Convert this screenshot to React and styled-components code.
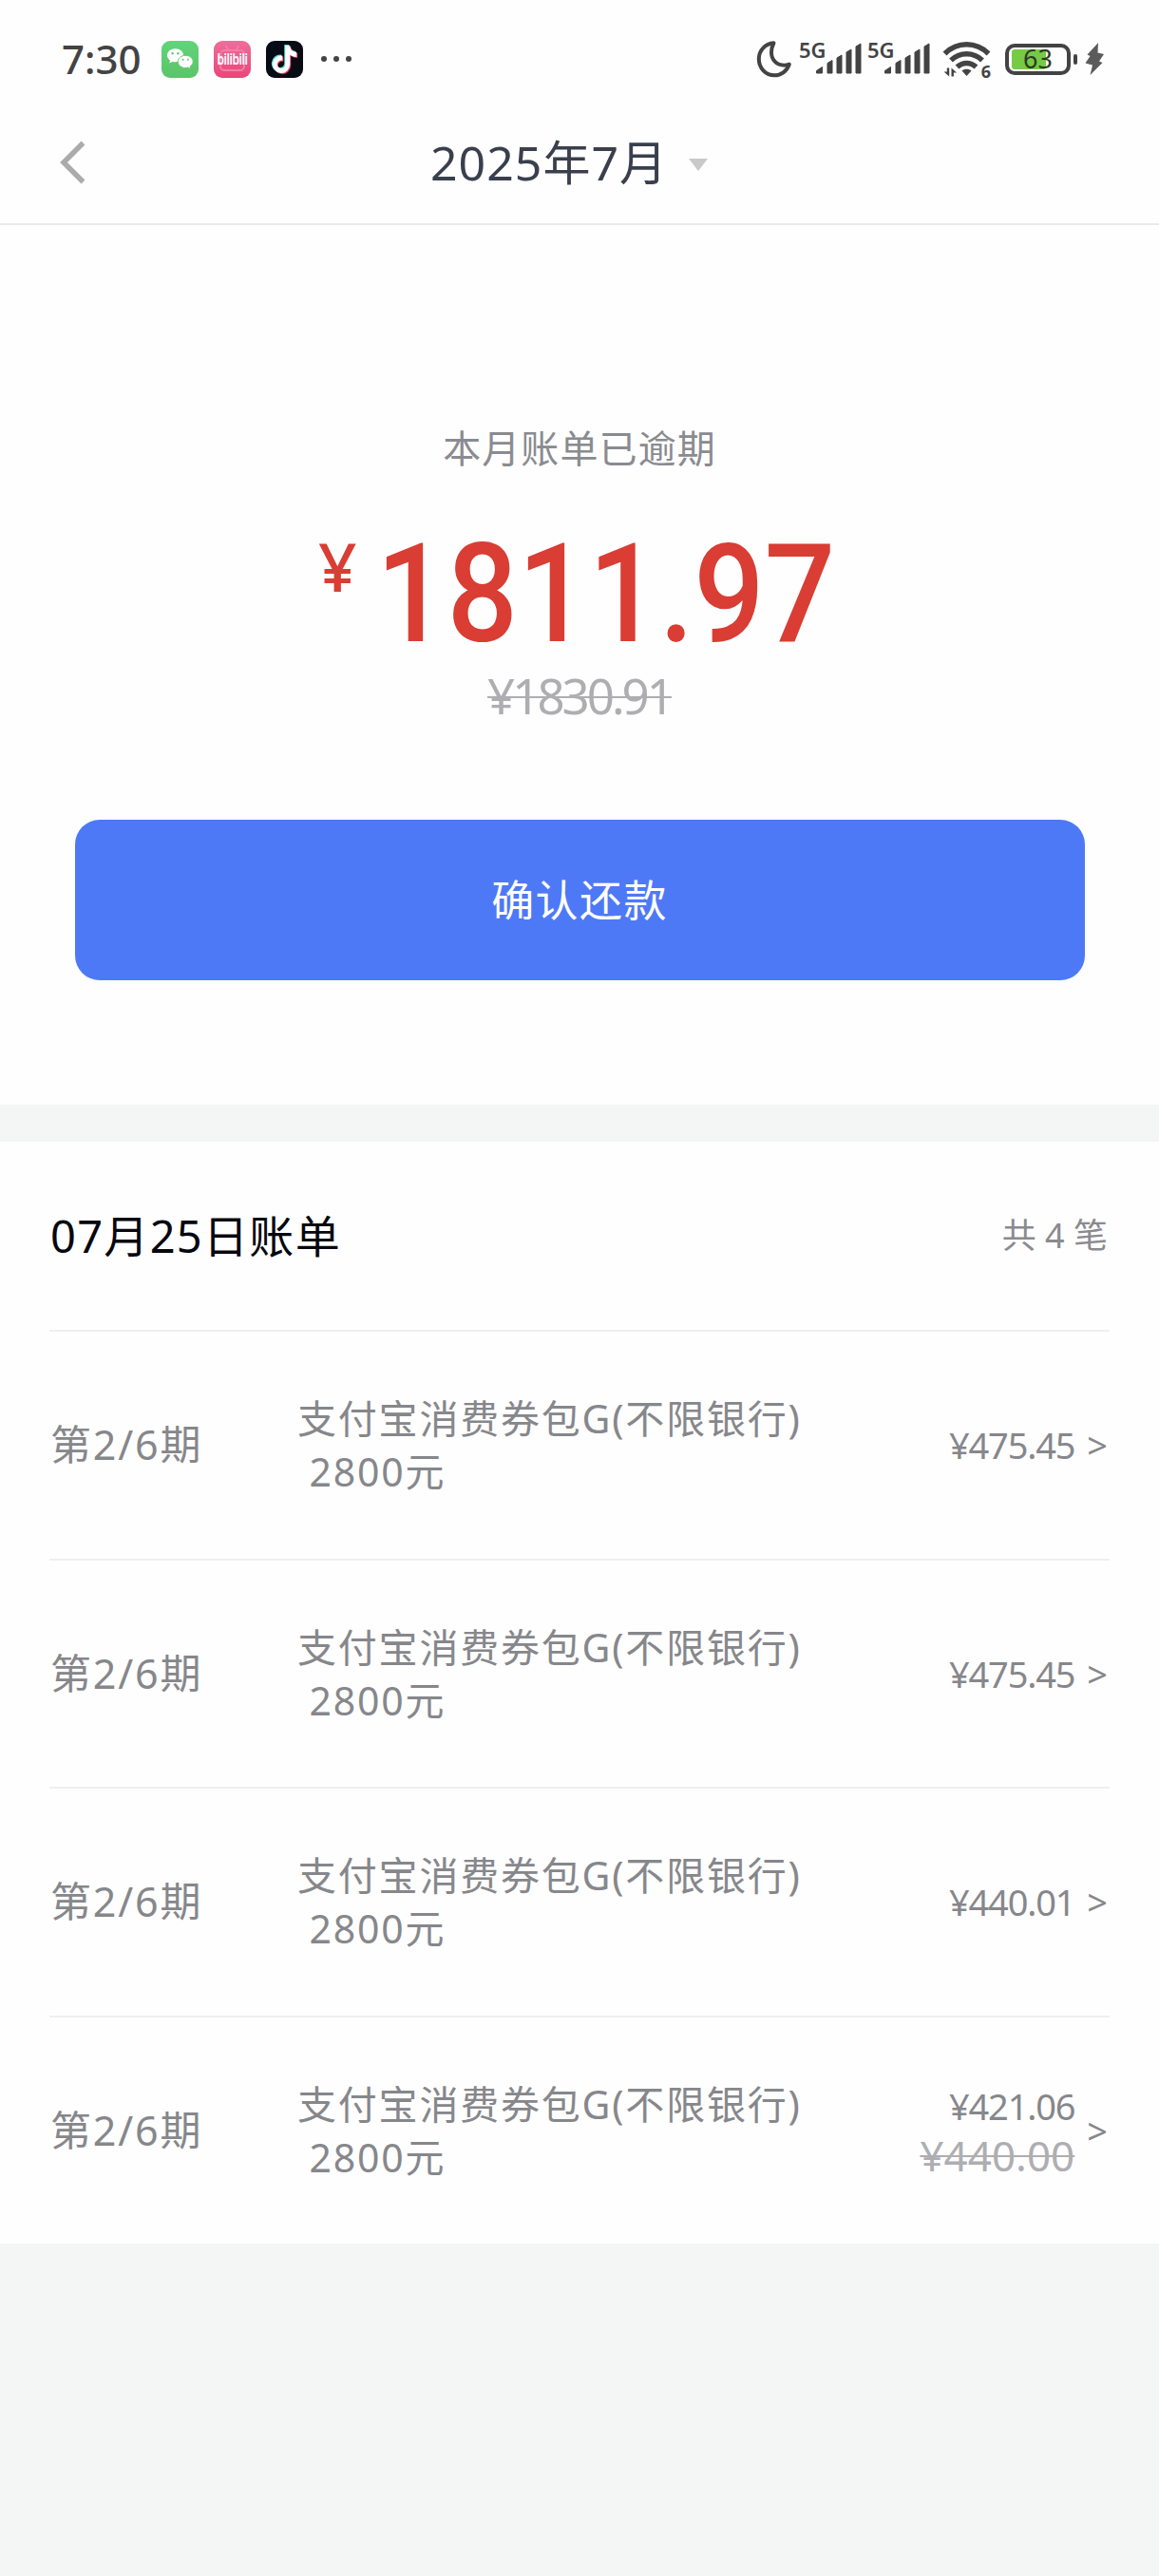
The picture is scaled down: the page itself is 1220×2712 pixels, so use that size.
import React from "react";
import styled, { createGlobalStyle } from "styled-components";
import { FaTiktok } from "react-icons/fa6";

const bills = [
  { id: 1, term: "第2/6期", amount: "¥475.45" },
  { id: 2, term: "第2/6期", amount: "¥475.45" },
  { id: 3, term: "第2/6期", amount: "¥440.01" },
  { id: 4, term: "第2/6期", amount: "¥421.06", origin: "¥440.00" },
];

const productName = "支付宝消费券包G(不限银行)\n 2800元";

const WechatIcon = () => (
  <svg width="39" height="39" viewBox="0 0 39 39">
    <path
      fill="#fff"
      d="M14.500 8.300C9.800 8.300 6 11.400 6 15.300c0 2.200 1.200 4.100 3.100 5.400l-.9 2.900 3.300-1.700c1 .3 2 .4 3 .4 4.700 0 8.600-3.100 8.600-7s-3.900-7-8.600-7z"
    />
    <path
      fill="#fff"
      stroke="#5ecb70"
      strokeWidth="1"
      d="M25.300 15.300c-4.400 0-8 2.900-8 6.600s3.600 6.600 8 6.600c.9 0 1.800-.1 2.600-.4l3 1.600-.8-2.700c1.900-1.200 3.100-3 3.100-5.100 0-3.700-3.500-6.600-7.900-6.600z"
    />
    <g fill="#5ecb70">
      <circle cx="11.600" cy="13.200" r="1.200" />
      <circle cx="17.400" cy="13.200" r="1.200" />
      <circle cx="22.600" cy="19.800" r="1" />
      <circle cx="27.800" cy="19.800" r="1" />
    </g>
  </svg>
);

const TvOutline = () => (
  <svg width="39" height="39" viewBox="0 0 39 39" fill="none">
    <g stroke="#f07ea5" strokeWidth="2" strokeLinecap="round">
      <rect x="7" y="10" width="25" height="21" rx="4" />
      <path d="M13 6l3 4M26 6l-3 4" />
    </g>
  </svg>
);

const MoonIcon = () => (
  <svg width="38" height="40" viewBox="0 0 38 40">
    <path
      d="M18.500 3.300C9.500 4 2.800 11 2.800 20c0 9.700 7.300 17.300 16.400 17.300 7.200 0 13.400-4.700 15.600-11.600-2 .8-3.600 1-5.300 1C21.600 26.700 16 21 16 13.300c0-3.700.9-7 2.500-10z"
      fill="none"
      stroke="#434343"
      strokeWidth="4"
      strokeLinejoin="round"
    />
  </svg>
);

const SignalBars = () => (
  <svg width="66" height="36" viewBox="0 0 66 36">
    <path
      fill="#434343"
      stroke="#434343"
      strokeWidth="1"
      strokeLinejoin="round"
      d="M17.500 30.500l6-4v6.500h-6zM29 22.500l5-3V33h-5zM39 17l5-3v19h-5zM49 11l5-3v25h-5zM59 5l5-3v31h-5z"
    />
  </svg>
);

const WifiIcon = () => (
  <svg width="52" height="42" viewBox="0 0 52 42">
    <g fill="none" stroke="#434343" strokeWidth="5.500">
      <path d="M2.500 15.500C15.500 2.500 35.500 2.500 48.500 15.500" />
      <path d="M9 22.500C18.500 13.500 32.500 13.500 42 22.500" />
      <path d="M15.500 29.500C21.500 24 29.500 24 35.500 29.500" />
    </g>
    <path
      fill="#434343"
      d="M25.500 39l-5-5.500c2.500-2.300 7.500-2.300 10 0zM4.800 30.500h2.400V39.500L1.500 34.500h3.300zM9.500 39.500v-9l5.500 5h-3.100v4z"
    />
  </svg>
);

const BoltIcon = () => (
  <svg width="22" height="36" viewBox="0 0 22 36">
    <path
      fill="#5b5b5b"
      d="M15 1L3.500 13.500 6.500 15 1.500 22.500l7.500 2L6.500 35 19.500 22l-3.500-1.500L21 13l-6.500-1.500z"
    />
  </svg>
);

const BackIcon = () => (
  <svg width="30" height="48" viewBox="0 0 30 48">
    <path
      d="M25.500 3.500L5 24l20.500 20.500"
      fill="none"
      stroke="#ababab"
      strokeWidth="5.500"
    />
  </svg>
);

const Signal = () => (
  <SignalBox>
    <SignalBars />
    <SignalLabel>5G</SignalLabel>
  </SignalBox>
);

const BillItem = ({ term, amount, origin }) => (
  <BillRow>
    <Term>{term}</Term>
    <ProductName>{productName}</ProductName>
    <AmountBox>
      <Amount>{amount}</Amount>
      {origin && <OriginAmount>{origin}</OriginAmount>}
    </AmountBox>
    <Arrow>&gt;</Arrow>
  </BillRow>
);

const App = () => {
  return (
    <Page>
      <GlobalStyle />
      <StatusBar>
        <Time>7:30</Time>
        <AppList>
          <AppBadge $background="linear-gradient(#62d479, #5cc46a)">
            <WechatIcon />
          </AppBadge>
          <AppBadge $background="linear-gradient(#f06d9b, #e94679)">
            <TvOutline />
            <BiliText>bilibili</BiliText>
          </AppBadge>
          <AppBadge $background="#070b14">
            <Note $color="#4fe3e0" $shift={-1} />
            <Note $color="#ee3b5e" $shift={1} />
            <Note $color="#fff" $shift={0} />
          </AppBadge>
        </AppList>
        <Dots>
          <i />
          <i />
          <i />
        </Dots>
        <SystemIcons>
          <MoonIcon />
          <Signal />
          <Signal />
          <WifiBox>
            <WifiIcon />
            <WifiLabel>6</WifiLabel>
          </WifiBox>
          <Battery>
            <BatteryLevel />
            <BatteryText>63</BatteryText>
          </Battery>
          <BatteryNub />
          <BoltIcon />
        </SystemIcons>
      </StatusBar>

      <Header>
        <BackButton>
          <BackIcon />
        </BackButton>
        <MonthPicker>
          2025年7月
          <Caret />
        </MonthPicker>
      </Header>

      <Summary>
        <SummaryLabel>本月账单已逾期</SummaryLabel>
        <Total>
          <Currency>¥</Currency>
          <TotalNumber>1811.97</TotalNumber>
        </Total>
        <TotalOrigin>¥1830.91</TotalOrigin>
        <PayButton>确认还款</PayButton>
      </Summary>

      <BillSection>
        <BillHeader>
          <BillTitle>07月25日账单</BillTitle>
          <BillCount>共 4 笔</BillCount>
        </BillHeader>
        {bills.map((bill) => (
          <BillItem key={bill.id} {...bill} />
        ))}
      </BillSection>
    </Page>
  );
};

const GlobalStyle = createGlobalStyle`
  * {
    box-sizing: border-box;
  }
  body {
    margin: 0;
    background-color: #f4f5f5;
    font-family: "Noto Sans", "Noto Sans CJK SC", sans-serif;
  }
  svg {
    display: block;
    flex: none;
  }
`;

const Page = styled.div`
  width: 1220px;
  min-height: 2712px;
  background-color: #f4f5f5;
`;

const StatusBar = styled.div`
  display: flex;
  align-items: center;
  height: 124px;
  padding: 0 57px 0 65px;
  background-color: #fefefe;
`;

const Time = styled.div`
  width: 105px;
  font-size: 42px;
  font-weight: 500;
  line-height: 60px;
  color: #434343;
`;

const AppList = styled.div`
  display: flex;
  gap: 16px;
`;

const AppBadge = styled.div`
  position: relative;
  width: 39px;
  height: 39px;
  border-radius: 9px;
  overflow: hidden;
  background: ${(props) => props.$background};
`;

const BiliText = styled.span`
  position: absolute;
  top: 9px;
  left: 0;
  width: 39px;
  font-size: 12px;
  font-weight: 600;
  line-height: 22px;
  text-align: center;
  letter-spacing: -0.4px;
  color: #fff;
  transform: scaleY(1.3);
`;

const Note = styled(FaTiktok)`
  position: absolute;
  top: ${(props) => 5 + props.$shift}px;
  left: ${(props) => 6 + props.$shift}px;
  width: 27px;
  height: 29px;
  color: ${(props) => props.$color};
`;

const Dots = styled.div`
  display: flex;
  gap: 7px;
  margin-left: 19px;

  i {
    width: 6px;
    height: 6px;
    border-radius: 50%;
    background-color: #434343;
  }
`;

const SystemIcons = styled.div`
  display: flex;
  align-items: center;
  margin-left: auto;
`;

const SignalBox = styled.div`
  position: relative;
  width: 66px;
  margin-left: 8px;

  & + & {
    margin-left: 6px;
  }
`;

const SignalLabel = styled.span`
  position: absolute;
  top: -2px;
  left: -1px;
  font-size: 22px;
  font-weight: 600;
  line-height: 20px;
  color: #434343;
`;

const WifiBox = styled.div`
  position: relative;
  margin-left: 12px;
`;

const WifiLabel = styled.span`
  position: absolute;
  right: 1px;
  bottom: -1px;
  font-size: 18px;
  font-weight: 700;
  line-height: 18px;
  color: #434343;
`;

const Battery = styled.div`
  position: relative;
  width: 69px;
  height: 33px;
  margin-left: 14px;
  padding: 2px 3px;
  border: 4px solid #434343;
  border-radius: 10px;
`;

const BatteryLevel = styled.div`
  width: 36px;
  height: 21px;
  border-radius: 3px;
  background-color: #76ca45;
`;

const BatteryText = styled.span`
  position: absolute;
  inset: -4px;
  font-size: 27px;
  line-height: 32px;
  text-align: center;
  color: #2c3a24;
`;

const BatteryNub = styled.div`
  width: 4px;
  height: 11px;
  margin: 0 7px 0 3px;
  border-radius: 2px;
  background-color: #434343;
`;

const Header = styled.div`
  display: flex;
  align-items: center;
  height: 113px;
  padding: 0 62px 17px;
  border-bottom: 2px solid #eaeaea;
  background-color: #fefefe;
`;

const BackButton = styled.button`
  width: 391px;
  padding: 0;
  border: none;
  background: none;
`;

const MonthPicker = styled.div`
  display: flex;
  align-items: center;
  font-size: 50px;
  line-height: 70px;
  letter-spacing: 1px;
  color: #3a3f4d;
`;

const Caret = styled.span`
  margin: 4px 0 0 22px;
  border-top: 13px solid #c9c9c9;
  border-left: 10px solid transparent;
  border-right: 10px solid transparent;
`;

const Summary = styled.div`
  display: flex;
  flex-direction: column;
  align-items: center;
  height: 926px;
  padding-top: 205px;
  background-color: #fefefe;
`;

const SummaryLabel = styled.div`
  font-size: 40px;
  line-height: 60px;
  letter-spacing: 1.1px;
  color: #8a8b90;
`;

const Total = styled.div`
  display: flex;
  align-items: flex-start;
  width: 550px;
  height: 120px;
  margin-top: 64px;
  color: #d93d33;
`;

const Currency = styled.span`
  flex: none;
  width: 61px;
  font-size: 71px;
  font-weight: 500;
  line-height: 59px;
`;

/* condensed slightly to get the narrow DIN look of the total */
const TotalNumber = styled.span`
  font-family: Roboto, sans-serif;
  font-size: 144px;
  font-weight: 500;
  line-height: 120px;
  transform: scaleX(0.91);
  transform-origin: left center;
`;

const TotalOrigin = styled.div`
  margin-top: 16px;
  font-size: 51px;
  line-height: 60px;
  letter-spacing: -3px;
  text-decoration: line-through;
  text-decoration-thickness: 2px;
  color: #aeaeb2;
`;

const PayButton = styled.button`
  width: 1063px;
  height: 169px;
  margin-top: 101px;
  padding: 0 6px 4px;
  border: none;
  border-radius: 26px;
  background-color: #4e79f6;
  font-family: inherit;
  font-size: 45px;
  letter-spacing: 1.4px;
  color: #fff;
`;

const BillSection = styled.div`
  margin-top: 39px;
  padding: 0 52px;
  background-color: #fefefe;
`;

const BillHeader = styled.div`
  display: flex;
  align-items: center;
  justify-content: space-between;
  height: 198px;
  padding: 0 2px 0 1px;
`;

const BillTitle = styled.h1`
  margin: 0;
  font-size: 47px;
  font-weight: 400;
  line-height: 70px;
  letter-spacing: 1.3px;
  color: #06070f;
`;

const BillCount = styled.div`
  font-size: 36px;
  line-height: 50px;
  color: #8a8b8f;
`;

const BillRow = styled.div`
  display: flex;
  align-items: center;
  height: 240.5px;
  padding: 0 2px 0 1px;
  border-top: 2px solid #efefef;
  color: #86878b;
`;

const Term = styled.div`
  width: 260px;
  font-size: 43px;
  line-height: 60px;
  letter-spacing: 1.8px;
`;

const ProductName = styled.div`
  font-size: 41px;
  line-height: 56px;
  letter-spacing: 1.8px;
  white-space: pre-wrap;
`;

const AmountBox = styled.div`
  display: flex;
  flex-direction: column;
  align-items: flex-end;
  margin-left: auto;
`;

const Amount = styled.div`
  font-size: 38px;
  line-height: 52px;
  letter-spacing: -1.2px;
`;

const OriginAmount = styled.div`
  font-size: 44px;
  line-height: 52px;
  text-decoration: line-through;
  text-decoration-thickness: 2px;
  color: #aeaeb2;
`;

const Arrow = styled.div`
  margin-left: 13px;
  font-size: 38px;
  line-height: 52px;
`;

export default App;
